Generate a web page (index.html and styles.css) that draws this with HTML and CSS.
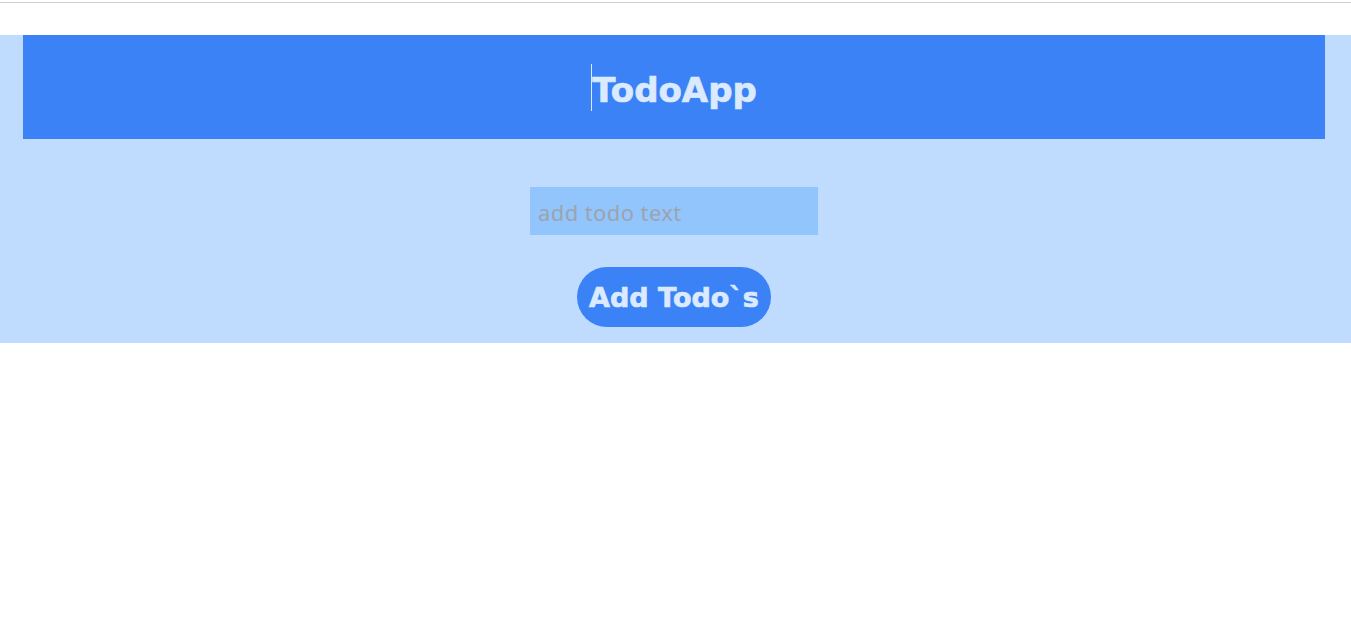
FILE: index.html
```html
<!DOCTYPE html>
<html>
<head>
<meta charset="utf-8">
<title>TodoApp</title>
<link rel="stylesheet" href="styles.css">
</head>
<body>
<div class="topline"></div>
<main class="app">
  <header class="app-header">
    <h1 class="title"><span class="title-text">TodoApp</span></h1>
  </header>
  <input class="todo-input" type="text" placeholder="add todo text">
  <button class="add-btn">Add Todo`s</button>
</main>
</body>
</html>
```

FILE: styles.css
```css
html, body {
  margin: 0;
  padding: 0;
  background: #ffffff;
}
.topline {
  margin-top: 2px;
  border-top: 1px solid #d0d0d0;
  height: 0;
}
.app {
  margin-top: 32px;
  background: #bfdbfe;
  padding: 0 26px 16px 23px;
  display: flex;
  flex-direction: column;
  align-items: center;
}
.app-header {
  align-self: stretch;
  height: 104px;
  background: #3b82f6;
  display: flex;
  align-items: center;
  justify-content: center;
}
.title {
  margin: 0;
  font-family: "DejaVu Sans", sans-serif;
  font-weight: bold;
  font-size: 34px;
  color: #dbeafe;
  line-height: 1;
  -webkit-text-stroke: 0.7px #dbeafe;
}
.title-text {
  display: inline-block;
  border-left: 1px solid #dbeafe;
  padding: 9px 0 4px 0;
  line-height: 34px;
}
.todo-input {
  margin-top: 48px;
  width: 288px;
  height: 48px;
  box-sizing: border-box;
  border: none;
  outline: none;
  background: #93c5fd;
  padding: 2px 8px 0 8px;
  font-family: "Noto Sans", sans-serif;
  font-size: 22px;
  letter-spacing: 0.4px;
  color: #6b7280;
}
.todo-input::placeholder {
  color: #9ca3af;
}
.add-btn {
  margin-top: 32px;
  width: 194px;
  height: 60px;
  border: none;
  border-radius: 30px;
  background: #3b82f6;
  color: #dbeafe;
  font-family: "DejaVu Sans", sans-serif;
  font-weight: bold;
  font-size: 27px;
  -webkit-text-stroke: 0.7px #dbeafe;
  padding: 0;
  cursor: pointer;
}
```
